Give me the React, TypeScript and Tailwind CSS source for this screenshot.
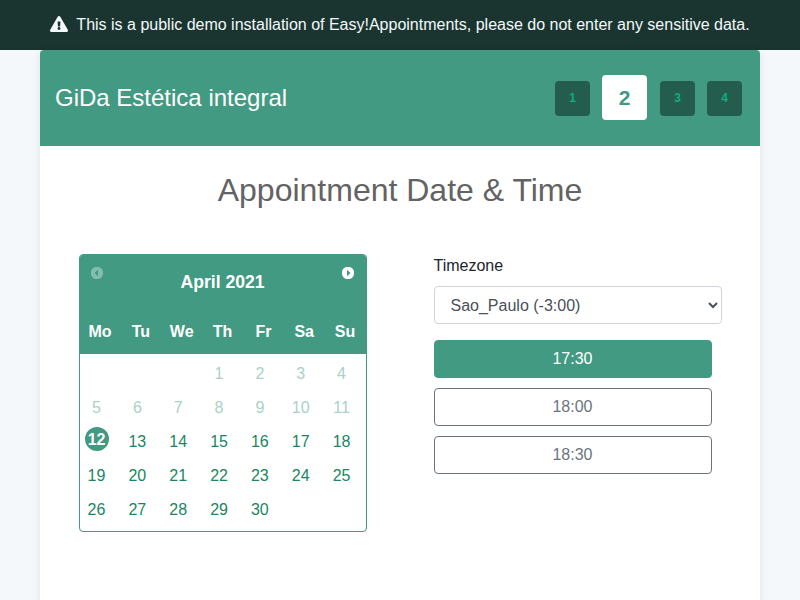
import { FaExclamationTriangle } from "react-icons/fa";

const weekdays = ["Mo", "Tu", "We", "Th", "Fr", "Sa", "Su"];
const leadingBlanks = [0, 1, 2];
const days = Array.from({ length: 30 }, (_, i) => i + 1);
const today = 12;

function Step({ n, active }: { n: number; active?: boolean }) {
  return (
    <div
      className={
        active
          ? "mr-px flex h-[45px] w-[45px] items-center justify-center rounded-[4px] bg-white text-[21px] font-bold text-[#429a82]"
          : "mt-[2px] flex h-[35px] w-[35px] items-center justify-center rounded-[4px] bg-[#245d4e] pb-px text-[12px] font-bold text-[#0cae82]"
      }
    >
      {n}
    </div>
  );
}

function ArrowDot({ left }: { left?: boolean }) {
  return (
    <svg width="12" height="12" viewBox="0 0 12 12" className={left ? "mt-[7px] opacity-35" : "mt-[7px]"}>
      <path
        fill="#fff"
        fillRule="evenodd"
        d={
          left
            ? "M6 -0.2A6.2 6.2 0 0 1 6 12.2A6.2 6.2 0 0 1 6 -0.2ZM7 2.8V9.2L3.5 6Z"
            : "M6 -0.2A6.2 6.2 0 0 1 6 12.2A6.2 6.2 0 0 1 6 -0.2ZM5 2.8V9.2L8.5 6Z"
        }
      />
    </svg>
  );
}

function Day({ day }: { day: number }) {
  if (day === today) {
    return (
      <div className="h-[34px] pt-[5px] pl-[5px]">
        <div className="h-6 w-6 rounded-full bg-[#429a82] pt-px pr-[0.8px] text-center leading-6 font-bold text-white">
          {day}
        </div>
      </div>
    );
  }
  return (
    <div
      className={
        day < today
          ? "h-[34px] w-[33px] pt-[8px] text-center leading-6 text-[#aad2c5]"
          : "h-[34px] w-[33px] pt-[8px] text-center leading-6 text-[#1c8561]"
      }
    >
      {day}
    </div>
  );
}

function Calendar() {
  return (
    <div className="h-[278px] w-[288px] overflow-hidden rounded-[4px] border border-[#429a82] bg-white">
      <div className="h-[99px] bg-[#429a82] text-white">
        <div className="flex justify-between pt-[5px] pr-[12px] pl-[11px]">
          <ArrowDot left />
          <div className="pt-[10px] text-[17.6px] leading-6 font-bold">April 2021</div>
          <ArrowDot />
        </div>
        <div className="mt-[26px] grid grid-cols-[repeat(7,40.85px)] font-bold">
          {weekdays.map((d) => (
            <div key={d} className="w-[40px] text-center leading-6">
              {d}
            </div>
          ))}
        </div>
      </div>
      <div className="grid grid-cols-[repeat(7,40.85px)]">
        {leadingBlanks.map((b) => (
          <div key={b} />
        ))}
        {days.map((d) => (
          <Day key={d} day={d} />
        ))}
      </div>
    </div>
  );
}

export default function App() {
  return (
    <div className="h-[600px] overflow-hidden bg-[#f4f8fb] font-['Liberation_Sans',Arial,sans-serif] text-[16px] text-[#212529]">
      <div className="flex h-[50px] items-center justify-center bg-[#1a3530] text-[#f4f8fb]">
        <FaExclamationTriangle className="mr-2 mb-[2px] h-4 w-[18px]" />
        <span className="leading-6">
          This is a public demo installation of Easy!Appointments, please do not enter any sensitive data.
        </span>
      </div>
      <main className="mx-auto h-[700px] w-[720px] rounded-[4px] bg-white shadow-[0_2px_8px_rgba(0,0,0,0.09)]">
        <header className="flex h-24 items-center justify-between rounded-t-[4px] bg-[#429a82] pr-[18px] pl-[15px]">
          <h1 className="text-[24px] leading-9 text-white">GiDa Estética integral</h1>
          <div className="flex items-center gap-3 pb-px">
            <Step n={1} />
            <Step n={2} active />
            <Step n={3} />
            <Step n={4} />
          </div>
        </header>
        <h2 className="pt-[25px] text-center text-[32px] leading-[38px] text-[#636363]">Appointment Date &amp; Time</h2>
        <div className="mt-[45px] flex items-start pl-[39px]">
          <Calendar />
          <div className="ml-[66.5px] w-[288px]">
            <label htmlFor="timezone" className="block leading-6">
              Timezone
            </label>
            <select
              id="timezone"
              className="mt-2 block h-[38px] w-full rounded-[4px] border border-[#ced4da] bg-white px-3 py-1.5 leading-6 text-[#495057]"
            >
              <option>Sao_Paulo (-3:00)</option>
            </select>
            <div className="mt-4 flex w-[278px] flex-col gap-[10px]">
              <button className="h-[38px] rounded-[4px] border border-[#429a82] bg-[#429a82] leading-6 text-white">
                17:30
              </button>
              <button className="h-[38px] rounded-[4px] border border-[#6c757d] leading-6 text-[#6c757d]">18:00</button>
              <button className="h-[38px] rounded-[4px] border border-[#6c757d] leading-6 text-[#6c757d]">18:30</button>
            </div>
          </div>
        </div>
      </main>
    </div>
  );
}
